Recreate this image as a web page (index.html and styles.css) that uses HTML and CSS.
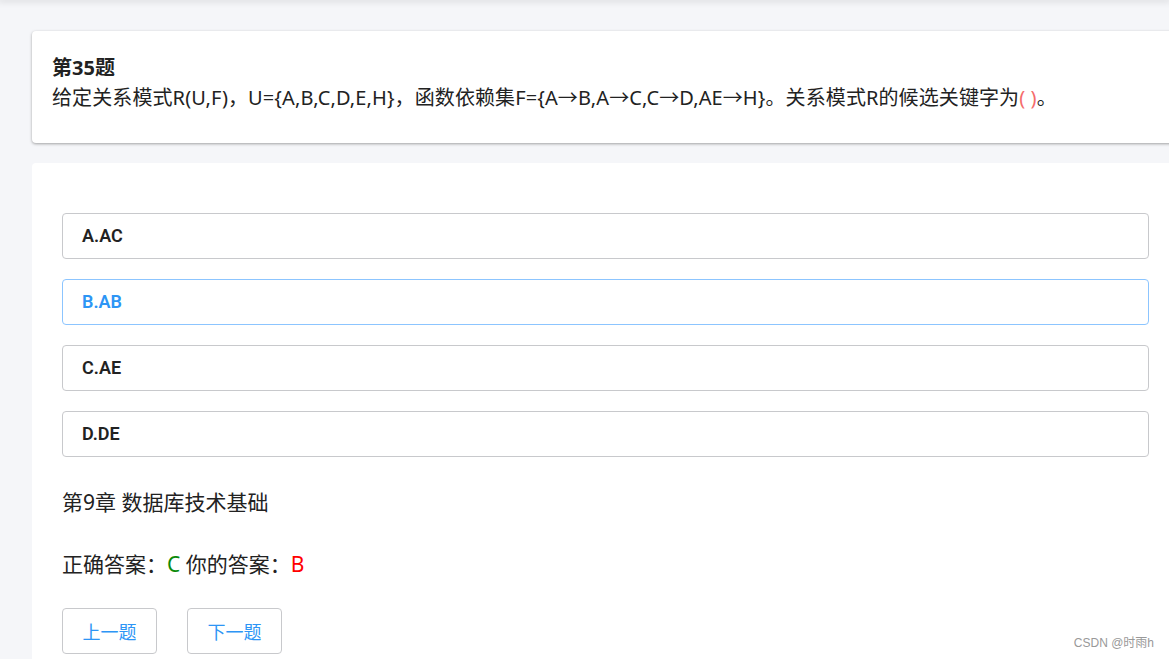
FILE: index.html
```html
<!DOCTYPE html>
<html>
<head>
  <meta charset="UTF-8">
  <title>第35题</title>
  <link rel="stylesheet" href="styles.css">
</head>
<body>
  <div class="topbar"></div>
  <div class="page">
    <!-- question -->
    <div class="card question">
      <div class="q-title">第35题</div>
      <div class="q-text">给定关系模式R(U,F)，U={A,B,C,D,E,H}，函数依赖集F={A→B,A→C,C→D,AE→H}。关系模式R的候选关键字为<span class="blank">( )</span>。</div>
    </div>

    <!-- options + result -->
    <div class="card answers">
      <div class="option">A.AC</div>
      <div class="option selected">B.AB</div>
      <div class="option">C.AE</div>
      <div class="option">D.DE</div>

      <div class="chapter">第9章 数据库技术基础</div>
      <div class="result">正确答案：<span class="right">C</span> 你的答案：<span class="wrong">B</span></div>

      <div class="nav">
        <button class="nav-btn">上一题</button>
        <button class="nav-btn">下一题</button>
      </div>
    </div>
  </div>
  <div class="watermark">CSDN @时雨h</div>
</body>
</html>
```

FILE: styles.css
```css
/* --- base --- */
html,body{margin:0;padding:0;height:100%;overflow:hidden;}
body{background:#f5f6f9;color:#303133;font-family:"Noto Sans","Noto Sans CJK SC",sans-serif;position:relative;}
.topbar{height:0;box-shadow:0 0 6px 2px rgba(0,0,0,.12);}
.page{padding:31px 0 0 32px;width:1147px;}
/* --- cards --- */
.card{background:#fff;border-radius:4px;}
.question{padding:22px 20px 30px;box-shadow:0 1px 3px rgba(0,0,0,.35);margin-bottom:20px;}
.q-title{font-size:20px;font-weight:bold;line-height:30px;color:#222;}
.q-text{font-size:20px;line-height:30px;color:#222;white-space:nowrap;letter-spacing:.1px;}
.blank{color:#f56c6c;}
.answers{padding:50px 30px 30px;}
/* --- options --- */
.option{height:44px;line-height:44px;border:1px solid #c8c9cc;border-radius:4px;padding:0 19px;margin-bottom:20px;
  font-family:Roboto,"Noto Sans CJK SC",sans-serif;font-size:18px;font-weight:600;color:#222;width:1047px;}
.option.selected{border-color:#8cc5ff;color:#2d95f5;}
/* --- result --- */
.chapter{font-size:21px;line-height:30px;margin-top:30px;color:#222;}
.result{font-size:21px;line-height:30px;margin-top:32px;color:#222;}
.right{color:#0a8a0a;}
.wrong{color:#ff0000;}
.nav{display:flex;gap:30px;margin-top:29px;}
.nav-btn{width:95px;height:46px;background:#fff;border:1px solid #c8c9cc;border-radius:4px;color:#2d95f5;
  font-family:"Noto Sans","Noto Sans CJK SC",sans-serif;font-size:18px;cursor:pointer;padding:0;}
.watermark{position:absolute;right:15px;bottom:9px;font-size:12px;color:#999;font-family:"Liberation Sans","Noto Sans CJK SC",sans-serif;}
```
